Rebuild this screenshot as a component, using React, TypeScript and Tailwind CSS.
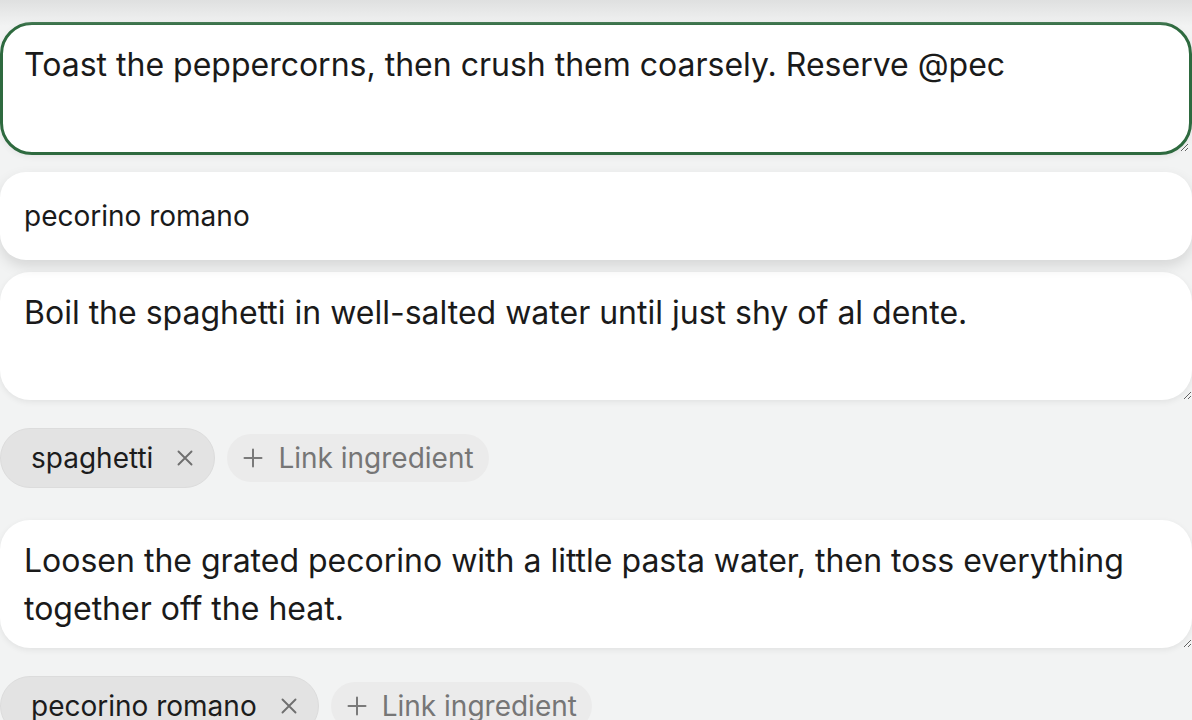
import React from "react";

const font = { fontFamily: "Inter, 'Noto Sans', sans-serif" };

function XIcon() {
  return (
    <svg width="16" height="16" viewBox="0 0 16 16" className="shrink-0">
      <path d="M1.5 1.5 L14.5 14.5 M14.5 1.5 L1.5 14.5" stroke="#6f6f6f" strokeWidth="1.9" strokeLinecap="round" />
    </svg>
  );
}

function PlusIcon() {
  return (
    <svg width="20" height="20" viewBox="0 0 20 20" className="shrink-0">
      <path d="M10 1.5 V18.5 M1.5 10 H18.5" stroke="#7a7a7a" strokeWidth="2" strokeLinecap="round" />
    </svg>
  );
}

function ChipRow({ name }: { name: string }) {
  return (
    <div className="flex h-[60px] items-center gap-[12px]">
      <div className="flex h-[60px] items-center gap-[24px] rounded-full border border-[#dcdcdc] bg-[#e3e3e3] pl-[30px] pr-[21px] text-[28px] text-[#1c1c1c]">
        <span>{name}</span>
        <XIcon />
      </div>
      <div className="flex h-[48px] items-center gap-[15px] rounded-full bg-[#ebebeb] pl-[16px] pr-[15px] text-[28px] text-[#767676]">
        <PlusIcon />
        <span>Link ingredient</span>
      </div>
    </div>
  );
}

export default function App() {
  return (
    <div className="relative min-h-screen overflow-hidden bg-[#f2f3f3]" style={font}>
      <div className="pointer-events-none absolute inset-x-0 top-0 z-20 h-[26px] bg-gradient-to-b from-[#dfe0e0] to-transparent" />
      <div className="flex flex-col pt-[22px]">
        <div className="relative flex flex-col">
          <textarea
            className="h-[133px] w-full resize-y rounded-[32px] border-[3px] border-[#2e6a3f] bg-white px-[21px] pt-[16px] text-[32px] leading-[48px] text-[#1a1a1a] outline-none shadow-[0_2px_6px_rgba(0,0,0,0.06)]"
            defaultValue="Toast the peppercorns, then crush them coarsely. Reserve @pec"
          />
          <div className="mt-[25px] h-[60px]" />
          <div className="absolute inset-x-0 top-[150px] z-10 flex h-[88px] items-center rounded-[26px] bg-white px-[24px] text-[28px] text-[#1a1a1a] shadow-[0_6px_14px_rgba(0,0,0,0.12)]">
            pecorino romano
          </div>
        </div>

        <div className="mt-[32px] flex flex-col">
          <textarea
            className="h-[128px] w-full resize-y rounded-[30px] bg-white px-[24px] pt-[17px] text-[32px] leading-[48px] text-[#1a1a1a] outline-none shadow-[0_2px_6px_rgba(0,0,0,0.07)]"
            defaultValue="Boil the spaghetti in well-salted water until just shy of al dente."
          />
          <div className="mt-[28px]">
            <ChipRow name="spaghetti" />
          </div>
        </div>

        <div className="mt-[32px] flex flex-col">
          <textarea
            className="h-[128px] w-full resize-y rounded-[30px] bg-white px-[24px] pt-[17px] text-[32px] leading-[48px] text-[#1a1a1a] outline-none shadow-[0_2px_6px_rgba(0,0,0,0.07)]"
            defaultValue="Loosen the grated pecorino with a little pasta water, then toss everything together off the heat."
          />
          <div className="mt-[28px]">
            <ChipRow name="pecorino romano" />
          </div>
        </div>
      </div>
    </div>
  );
}
